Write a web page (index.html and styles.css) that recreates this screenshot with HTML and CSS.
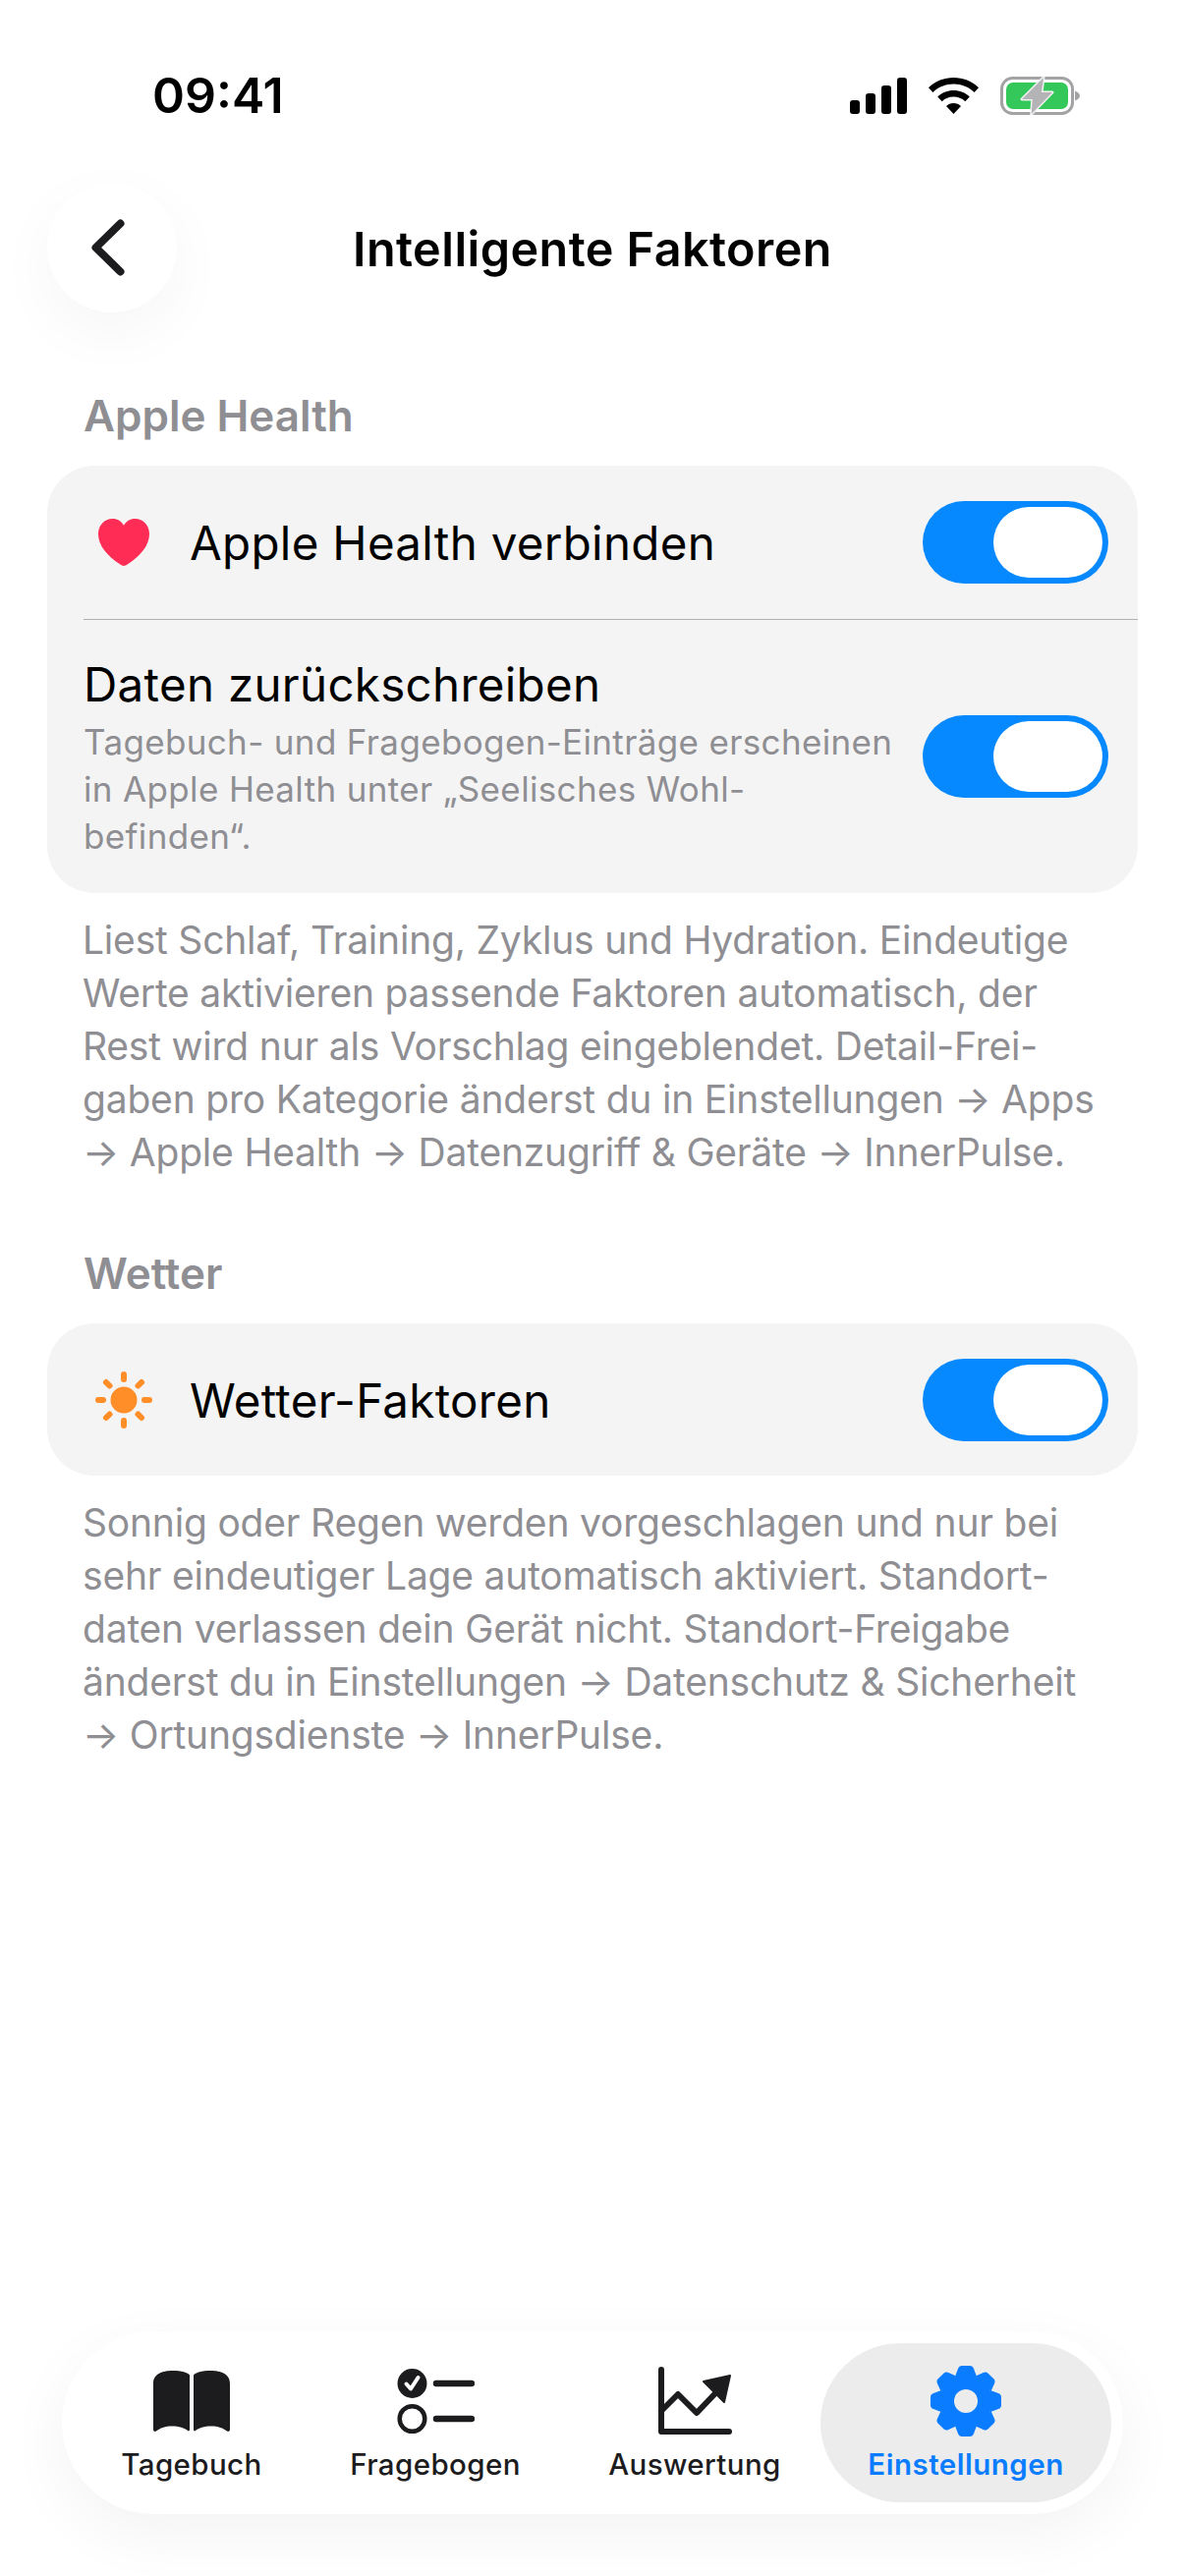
FILE: index.html
```html
<!DOCTYPE html>
<html lang="de">
<head>
<meta charset="utf-8">
<title>Intelligente Faktoren</title>
<link rel="stylesheet" href="styles.css">
</head>
<body>
<div class="screen">
  <div class="status">
    <span class="time">09:41</span>
    <div class="status-icons">
      <svg class="sig" viewBox="0 0 58 37" width="58" height="37"><rect x="0" y="23" width="10" height="14" rx="3"/><rect x="16" y="16" width="10" height="21" rx="3"/><rect x="32" y="8" width="10" height="29" rx="3"/><rect x="48" y="0" width="10" height="37" rx="3"/></svg>
      <svg class="wifi" viewBox="0 0 51 37" width="51" height="37"><path d="M25.5 0C35 0 44 3.6 51 10.2L46.6 15C40.8 9.6 33.4 6.6 25.5 6.6S10.200 9.6 4.400 15L0 10.200C7 3.600 16 0 25.500 0Z"/><path d="M25.500 13C31.700 13 37.400 15.300 41.800 19.400L37.300 24.200C34 21.200 30 19.600 25.500 19.600S17 21.200 13.700 24.200L9.200 19.400C13.600 15.300 19.300 13 25.500 13Z"/><path d="M25.500 26C28.400 26 31 27 33 29L25.500 37L18 29C20 27 22.600 26 25.500 26Z"/></svg>
      <svg class="batt" viewBox="0 0 82 39" width="82" height="39"><rect x="1.500" y="1.500" width="72" height="36" rx="11" fill="none" stroke="#a3a3a5" stroke-width="3"/><rect x="6" y="6" width="63" height="27" rx="7" fill="#34c759"/><path d="M76 14.500C79 15.500 81 17.500 81 19.500S79 23.500 76 24.500Z" fill="#a3a3a5"/><path d="M44 1L22 23H32.700L31.700 38L53 16H42Z" fill="#b4b4b6" stroke="#f2f2f4" stroke-width="3" stroke-linejoin="round" paint-order="stroke"/></svg>
    </div>
  </div>

  <header class="nav">
    <button class="back" type="button" aria-label="Zurück">
      <svg viewBox="0 0 34 58" width="34" height="58"><path d="M29.500 4.500L4.500 29L29.500 53.500" fill="none" stroke="#1c1c1e" stroke-width="8" stroke-linecap="round" stroke-linejoin="round"/></svg>
    </button>
    <h1 class="title">Intelligente Faktoren</h1>
    <span class="nav-spacer"></span>
  </header>

  <main class="content">
    <h2 class="sec-head first">Apple Health</h2>
    <section class="card">
      <div class="row row-single row-sep">
        <span class="row-icon">
          <svg viewBox="0 0 52 48" width="52" height="48"><path d="M26 48C24.800 48 23.500 47.300 22 46.300C9 37.600 0 27.300 0 15.500C0 6.500 6.300 0 14.500 0C19.600 0 23.600 2.700 26 6.800C28.400 2.700 32.400 0 37.500 0C45.700 0 52 6.500 52 15.500C52 27.300 43 37.600 30 46.300C28.500 47.300 27.200 48 26 48Z" fill="#ff2d55"/></svg>
        </span>
        <span class="row-label">Apple Health verbinden</span>
        <span class="toggle"><span class="thumb"></span></span>
      </div>
      <div class="row row-multi">
        <div class="row-text">
          <div class="row-label">Daten zurückschreiben</div>
          <div class="row-sub">Tagebuch- und Fragebogen-Einträge erscheinen<br>in Apple Health unter „Seelisches Wohl-<br>befinden“.</div>
        </div>
        <span class="toggle"><span class="thumb"></span></span>
      </div>
    </section>
    <p class="foot">Liest Schlaf, Training, Zyklus und Hydration. Eindeutige<br>Werte aktivieren passende Faktoren automatisch, der<br>Rest wird nur als Vorschlag eingeblendet. Detail-Frei-<br>gaben pro Kategorie änderst du in Einstellungen → Apps<br>→ Apple Health → Datenzugriff &amp; Geräte → InnerPulse.</p>

    <h2 class="sec-head">Wetter</h2>
    <section class="card">
      <div class="row row-single">
        <span class="row-icon">
          <svg viewBox="0 0 58 58" width="58" height="58" fill="#ff8d28"><circle cx="29" cy="29" r="13.500"/><g stroke="#ff8d28" stroke-width="6" stroke-linecap="round"><path d="M29 3V8"/><path d="M29 50V55"/><path d="M3 29H8"/><path d="M50 29H55"/><path d="M11 11L14.500 14.500"/><path d="M47 11L43.500 14.500"/><path d="M11 47L14.500 43.500"/><path d="M47 47L43.500 43.500"/></g></svg>
        </span>
        <span class="row-label">Wetter-Faktoren</span>
        <span class="toggle"><span class="thumb"></span></span>
      </div>
    </section>
    <p class="foot foot-last">Sonnig oder Regen werden vorgeschlagen und nur bei<br>sehr eindeutiger Lage automatisch aktiviert. Standort-<br>daten verlassen dein Gerät nicht. Standort-Freigabe<br>änderst du in Einstellungen → Datenschutz &amp; Sicherheit<br>→ Ortungsdienste → InnerPulse.</p>
  </main>

  <nav class="tabbar">
    <div class="tab">
      <svg class="tab-icon" viewBox="0 0 80 74" width="80" height="74"><path d="M38 10.500C36 8 30 6 20 6C11 6 1 9 1 19V66C1 67.500 2.500 68.500 4 67.500C8 64.500 13 62.500 20 62.500C27 62.500 33 64.500 36 67C37 67.800 38 67.300 38 66Z" fill="#1c1c1e"/><path d="M42 10.500C44 8 50 6 60 6C69 6 79 9 79 19V66C79 67.500 77.500 68.500 76 67.500C72 64.500 67 62.500 60 62.500C53 62.500 47 64.500 44 67C43 67.800 42 67.300 42 66Z" fill="#1c1c1e"/></svg>
      <span class="tab-label">Tagebuch</span>
    </div>
    <div class="tab">
      <svg class="tab-icon" viewBox="0 0 80 74" width="80" height="74"><circle cx="16.500" cy="19" r="15" fill="#1c1c1e"/><path d="M10.500 19.500L15 24.500L22.500 13" fill="none" stroke="#fff" stroke-width="4" stroke-linecap="round" stroke-linejoin="round"/><circle cx="16.500" cy="55" r="12.800" fill="none" stroke="#1c1c1e" stroke-width="4.500"/><path d="M41 19H77M41 55H77" stroke="#1c1c1e" stroke-width="6.500" stroke-linecap="round"/></svg>
      <span class="tab-label">Fragebogen</span>
    </div>
    <div class="tab tab-third">
      <svg class="tab-icon" viewBox="0 0 80 74" width="80" height="74"><path d="M6 5V68H75" fill="none" stroke="#1c1c1e" stroke-width="6" stroke-linecap="round" stroke-linejoin="round"/><path d="M6 47L23 30L42 49L63 27" fill="none" stroke="#1c1c1e" stroke-width="6" stroke-linecap="round" stroke-linejoin="round"/><path d="M49 17L76 11L70 38Z" fill="#1c1c1e" stroke="#1c1c1e" stroke-width="2" stroke-linejoin="round"/></svg>
      <span class="tab-label">Auswertung</span>
    </div>
    <div class="tab tab-active">
      <svg class="tab-icon" viewBox="-40 -37 80 74" width="80" height="74"><g fill="#0a7cff"><circle r="27"/><path d="M-11-25L-8-33Q-7-36-4-36H4Q7-36 8-33L11-25Z"/><path transform="rotate(45)" d="M-11-25L-8-33Q-7-36-4-36H4Q7-36 8-33L11-25Z"/><path transform="rotate(90)" d="M-11-25L-8-33Q-7-36-4-36H4Q7-36 8-33L11-25Z"/><path transform="rotate(135)" d="M-11-25L-8-33Q-7-36-4-36H4Q7-36 8-33L11-25Z"/><path transform="rotate(180)" d="M-11-25L-8-33Q-7-36-4-36H4Q7-36 8-33L11-25Z"/><path transform="rotate(225)" d="M-11-25L-8-33Q-7-36-4-36H4Q7-36 8-33L11-25Z"/><path transform="rotate(270)" d="M-11-25L-8-33Q-7-36-4-36H4Q7-36 8-33L11-25Z"/><path transform="rotate(315)" d="M-11-25L-8-33Q-7-36-4-36H4Q7-36 8-33L11-25Z"/></g><circle r="12" fill="#ececec"/></svg>
      <span class="tab-label">Einstellungen</span>
    </div>
  </nav>
</div>
</body>
</html>
```

FILE: styles.css
```css
* { box-sizing: border-box; }
html, body { margin: 0; padding: 0; background: #fff; }
body { font-family: Inter, "Liberation Sans", sans-serif; color: #000; }

.screen {
  width: 1206px;
  height: 2622px;
  display: flex;
  flex-direction: column;
  overflow: hidden;
  background: #fff;
}

.status {
  height: 186px;
  flex: none;
  display: flex;
  justify-content: space-between;
  align-items: flex-start;
  padding: 66px 106px 0 155px;
}
.time { font-size: 50px; line-height: 62px; font-weight: 600; }
.status-icons { display: flex; align-items: center; gap: 22px; margin-top: 12px; }
.status-icons svg { display: block; }
.status-icons .sig, .status-icons .wifi { fill: #000; }

.nav {
  display: flex;
  align-items: center;
  padding: 0 48px;
  height: 132px;
  flex: none;
}
.back {
  width: 132px;
  height: 132px;
  flex: none;
  border: 0;
  padding: 0 8px 0 0;
  border-radius: 50%;
  background: #fff;
  display: flex;
  align-items: center;
  justify-content: center;
  box-shadow: 0 20px 64px rgba(0, 0, 0, .04);
}
.back svg { display: block; }
.nav-spacer { width: 132px; flex: none; }
.title {
  flex: 1;
  margin: 0;
  padding-top: 3px;
  text-align: center;
  font-size: 48.5px;
  line-height: 62px;
  font-weight: 600;
  letter-spacing: .45px;
}

.content { padding: 0 48px; flex: none; }
.sec-head {
  margin: 69px 0 24px;
  padding-left: 37px;
  font-size: 44px;
  line-height: 54px;
  font-weight: 600;
  color: #8e8e93;
}
.sec-head.first { margin-top: 78px; }

.card { background: #f4f4f4; border-radius: 48px; overflow: hidden; }
.row { display: flex; align-items: center; padding-right: 30px; margin-left: 37px; }
.row-single { height: 155px; }
.row-sep { height: 157px; border-bottom: 1px solid #b0b0b2; }
.row-multi { height: 278px; justify-content: space-between; }
.row-icon { width: 82px; margin-right: 26px; flex: none; display: flex; justify-content: center; }
.row-icon svg { display: block; }
.row-label { padding-top: 2px; font-size: 47.5px; line-height: 60px; letter-spacing: .3px; flex: 1; white-space: nowrap; }
.row-text { flex: 1; min-width: 0; }
.row-sub { margin-top: 4px; font-size: 35px; line-height: 48px; letter-spacing: .35px; color: #8e8e93; white-space: nowrap; }

.toggle {
  width: 189px;
  height: 84px;
  flex: none;
  border-radius: 42px;
  background: #0688ff;
  display: flex;
  justify-content: flex-end;
  align-items: center;
  padding-right: 6px;
}
.thumb { width: 111px; height: 72px; border-radius: 36px; background: #fff; display: block; }

.foot {
  margin: 21px 0 0;
  padding-left: 36px;
  font-size: 39px;
  line-height: 54px;
  letter-spacing: -.2px;
  color: #8e8e93;
  white-space: nowrap;
}

.tabbar {
  margin: auto 63px 63px;
  height: 186px;
  flex: none;
  border-radius: 93px;
  background: #fff;
  box-shadow: 0 20px 64px rgba(0, 0, 0, .05);
  display: grid;
  grid-template-columns: 240px 256px 264px 296px;
  align-items: stretch;
  padding: 12px;
}
.tab {
  display: flex;
  flex-direction: column;
  align-items: center;
  justify-content: center;
  gap: 9px;
  color: #1c1c1e;
}
.tab-third { padding-left: 8px; }
.tab-icon { display: block; }
.tab-label { font-size: 29.5px; line-height: 36px; letter-spacing: .4px; font-weight: 500; white-space: nowrap; }
.tab-active { background: #ececec; border-radius: 81px; color: #0a7cff; }
.tab-active .tab-label { font-weight: 600; letter-spacing: .5px; }
```
